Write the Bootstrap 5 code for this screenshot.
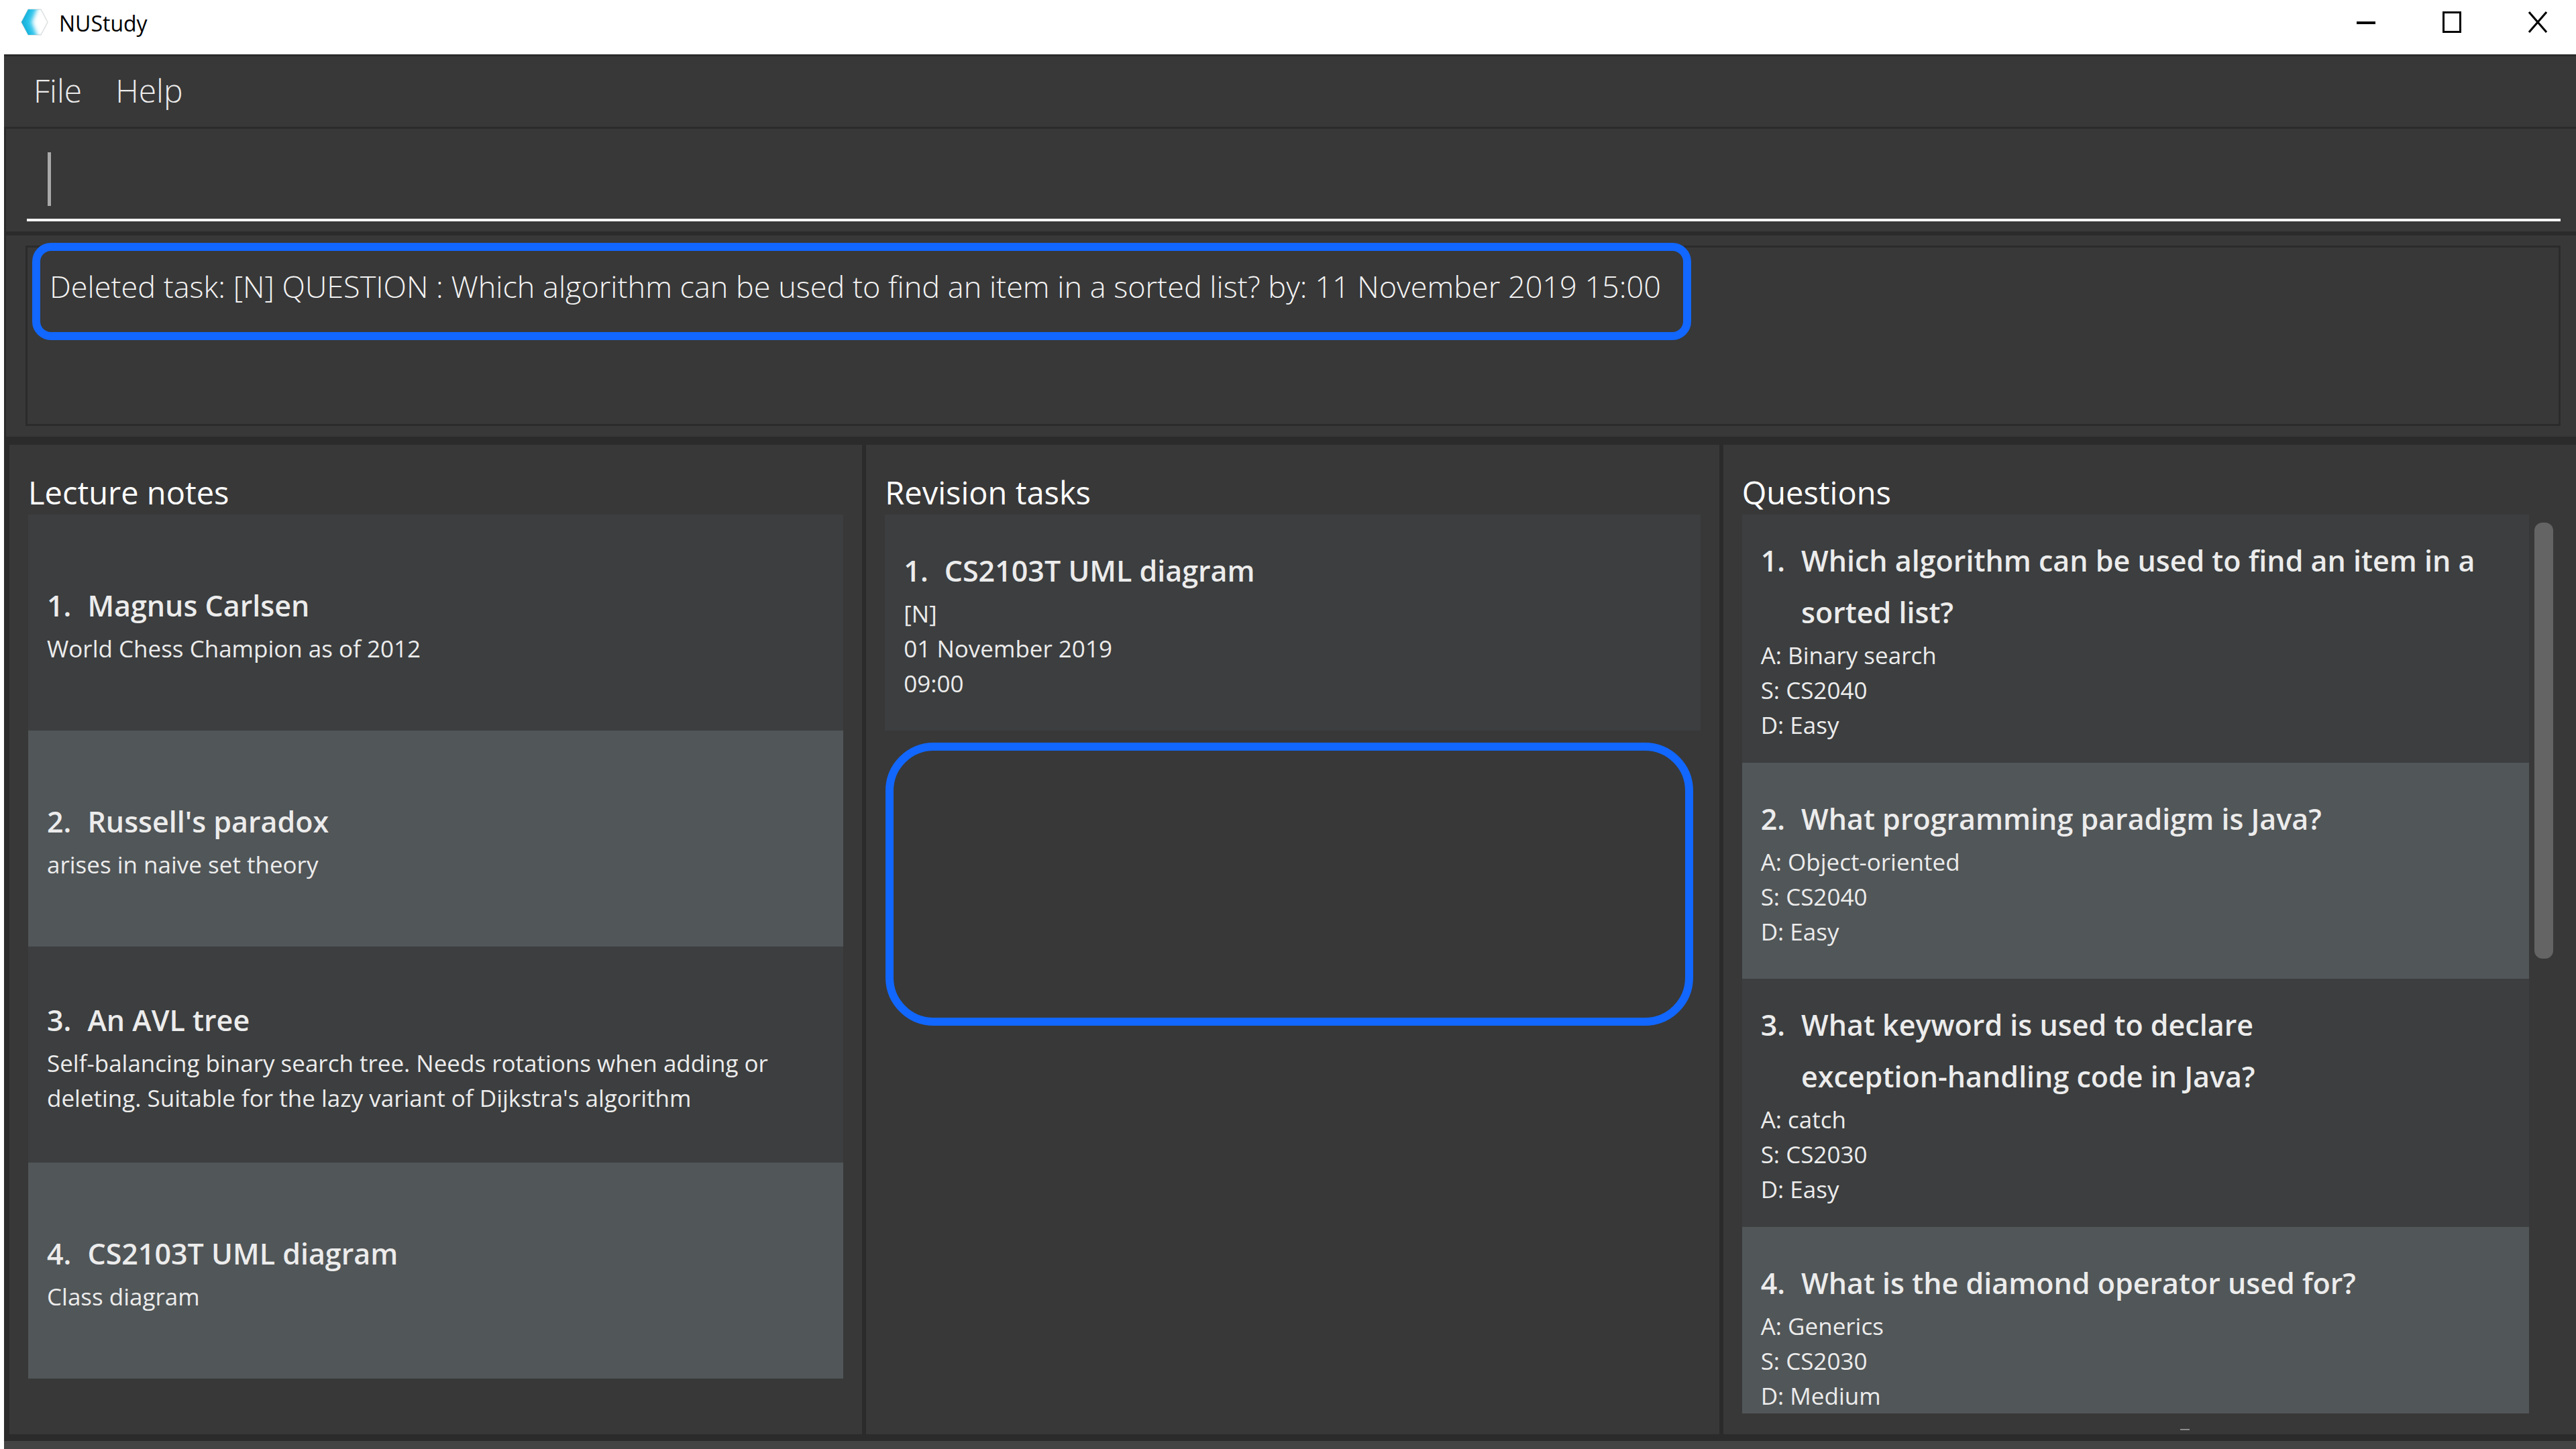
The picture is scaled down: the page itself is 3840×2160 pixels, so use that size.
<!DOCTYPE html>
<html lang="en">
<head>
<meta charset="utf-8">
<meta name="viewport" content="width=device-width, initial-scale=1">
<title>NUStudy</title>
<link rel="stylesheet" href="https://cdn.jsdelivr.net/npm/bootstrap@5.3.0/dist/css/bootstrap.min.css">
<style>
  :root {
    --base: #383838;
    --line: #2b2b2b;
    --row-odd: #3c3e3f;
    --row-even: #515658;
    --marker: #1167ff;
  }
  body { font-family: "Open Sans", "Noto Sans", sans-serif; background: #fff; color: #ececec; }
  .title-bar { height: 81px; padding: 0 43px 15px 31px; color: #000; }
  .title-text { font-size: 32px; line-height: 36px; padding-top: 4px; margin-left: 15px; }
  .window-buttons { gap: 100px; }
  .window-buttons .btn { line-height: 0; }
  .app-frame { margin-left: 6px; background: #444; padding-bottom: 12px; }
  .frame-line { border-left: 3px solid var(--line); background: var(--base); }
  .menu-strip { background: var(--base); border: solid var(--line); border-width: 3px 0; height: 111px; padding: 0 0 4px 44px; gap: 50px; }
  .menu-strip .nav-link { font-size: 48px; line-height: 64px; font-weight: 300; color: #ececec; }
  .command-area { height: 159px; padding: 16px 23px 15px 31px; border-bottom: 6px solid var(--line); }
  .command-line { border-bottom: 4px solid #f4f4f4; padding-left: 31px; }
  .caret { width: 5px; height: 80px; background: #a9a9a9; }
  .command-input, .command-input:focus { font-size: 45px; font-weight: 300; color: #fff; background: transparent; box-shadow: none; outline: 0; }
  .result-area { padding: 15px 23px 16px 29px; }
  .result-box { height: 269px; border: 3px solid var(--line); }
  .marker { border: 12px solid var(--marker); }
  .result-text { font-size: 45px; line-height: 105px; font-weight: 300; color: #f4f4f4; border-radius: 28px; margin: -7px 0 0 7px; padding: 0 33px 16px 14px; }
  .panels { display: grid; grid-template-columns: repeat(3, minmax(0, 1fr)); background: var(--line); gap: 6px; border: solid var(--line); border-width: 12px 0 10px 8px; min-height: 0; }
  .panel { background: var(--base); min-height: 0; padding: 38px 28px 0; }
  .panel-scroll { padding-right: 34px; }
  .panel-title { font-size: 47px; line-height: 66px; font-weight: 400; color: #fff; }
  .entry { min-height: 322px; padding: 30px 28px; }
  .entry:nth-child(odd) { background: var(--row-odd); }
  .entry:nth-child(even) { background: var(--row-even); }
  .entry-title { font-size: 43px; line-height: 77px; font-weight: 600; gap: 24px; padding-right: 24px; }
  .entry-text { font-size: 35px; line-height: 52px; }
  .removed-slot { height: 422px; border-radius: 72px; margin: 18px 11px 0 1px; }
  .list-wrap { gap: 8px; min-height: 0; }
  .scroll-thumb { width: 28px; height: 650px; margin-top: 12px; border-radius: 12px; background: #646464; }
  .panel-foot { height: 31px; padding: 23px 0 0 653px; }
  .grip { width: 14px; height: 2px; background: #8a8a8a; }
</style>
</head>
<body class="vh-100 d-flex flex-column overflow-hidden">

<header class="title-bar d-flex align-items-center flex-shrink-0">
  <svg width="42" height="40" viewBox="0 0 42 40" aria-hidden="true">
    <defs>
      <clipPath id="hex"><path d="M11 1H30L40 20L30 39H11L1 20Z"/></clipPath>
      <filter id="soft" x="-50%" y="-50%" width="200%" height="200%"><feGaussianBlur stdDeviation="3"/></filter>
    </defs>
    <path d="M11 1H30L40 20L30 39H11L1 20Z" fill="#fff" stroke="#dcdfe0" stroke-width="1.500"/>
    <g clip-path="url(#hex)">
      <path d="M-10 -10H28L16 20L28 50H-10Z" fill="#2cc3ea" filter="url(#soft)"/>
      <path d="M-10 -10H16L5 20L16 50H-10Z" fill="#0c9fca" fill-opacity=".7" filter="url(#soft)"/>
    </g>
  </svg>
  <span class="title-text">NUStudy</span>
  <div class="window-buttons d-flex ms-auto">
    <button type="button" class="btn p-0 border-0" aria-label="Minimize"><svg width="28" height="32" viewBox="0 0 28 32"><path d="M0 17H28" stroke="#000" stroke-width="4"/></svg></button>
    <button type="button" class="btn p-0 border-0" aria-label="Maximize"><svg width="28" height="32" viewBox="0 0 28 32"><rect x="1.500" y="1.500" width="25" height="29" fill="none" stroke="#000" stroke-width="3"/></svg></button>
    <button type="button" class="btn p-0 border-0" aria-label="Close"><svg width="28" height="32" viewBox="0 0 28 32"><path d="M1 1L27 31M27 1L1 31" stroke="#000" stroke-width="3"/></svg></button>
  </div>
</header>

<main class="app-frame d-flex flex-column flex-fill overflow-hidden">
  <nav class="menu-strip nav align-items-center flex-shrink-0">
    <a class="nav-link p-0" href="#">File</a>
    <a class="nav-link p-0" href="#">Help</a>
  </nav>

  <div class="command-area frame-line d-flex flex-shrink-0">
    <div class="command-line d-flex align-items-center flex-fill">
      <span class="caret"></span>
      <input type="text" class="command-input form-control border-0 p-0" aria-label="Command">
    </div>
  </div>

  <div class="result-area frame-line flex-shrink-0">
    <div class="result-box d-flex align-items-start" role="status">
      <div class="result-text marker">Deleted task: [N] QUESTION : Which algorithm can be used to find an item in a sorted list? by: 11 November 2019 15:00</div>
    </div>
  </div>

  <div class="panels flex-fill">
    <section class="panel">
      <h2 class="panel-title m-0">Lecture notes</h2>
      <div class="entries">
        <article class="entry d-flex flex-column justify-content-center">
          <div class="entry-title d-flex"><span>1.</span><span>Magnus Carlsen</span></div>
          <div class="entry-text">World Chess Champion as of 2012</div>
        </article>
        <article class="entry d-flex flex-column justify-content-center">
          <div class="entry-title d-flex"><span>2.</span><span>Russell's paradox</span></div>
          <div class="entry-text">arises in naive set theory</div>
        </article>
        <article class="entry d-flex flex-column justify-content-center">
          <div class="entry-title d-flex"><span>3.</span><span>An AVL tree</span></div>
          <div class="entry-text">Self-balancing binary search tree. Needs rotations when adding or deleting. Suitable for the lazy variant of Dijkstra's algorithm</div>
        </article>
        <article class="entry d-flex flex-column justify-content-center">
          <div class="entry-title d-flex"><span>4.</span><span>CS2103T UML diagram</span></div>
          <div class="entry-text">Class diagram</div>
        </article>
      </div>
    </section>

    <section class="panel">
      <h2 class="panel-title m-0">Revision tasks</h2>
      <div class="entries">
        <article class="entry d-flex flex-column justify-content-center">
          <div class="entry-title d-flex"><span>1.</span><span>CS2103T UML diagram</span></div>
          <div class="entry-text">[N]</div>
          <div class="entry-text">01 November 2019</div>
          <div class="entry-text">09:00</div>
        </article>
      </div>
      <div class="removed-slot marker"></div>
    </section>

    <section class="panel panel-scroll d-flex flex-column">
      <h2 class="panel-title m-0">Questions</h2>
      <div class="list-wrap d-flex flex-fill">
        <div class="entries flex-fill overflow-hidden">
          <article class="entry d-flex flex-column justify-content-center">
            <div class="entry-title d-flex"><span>1.</span><span>Which algorithm can be used to find an item in a sorted list?</span></div>
            <div class="entry-text">A: Binary search</div>
            <div class="entry-text">S: CS2040</div>
            <div class="entry-text">D: Easy</div>
          </article>
          <article class="entry d-flex flex-column justify-content-center">
            <div class="entry-title d-flex"><span>2.</span><span>What programming paradigm is Java?</span></div>
            <div class="entry-text">A: Object-oriented</div>
            <div class="entry-text">S: CS2040</div>
            <div class="entry-text">D: Easy</div>
          </article>
          <article class="entry d-flex flex-column justify-content-center">
            <div class="entry-title d-flex"><span>3.</span><span>What keyword is used to declare <span class="text-nowrap">exception-handling</span> code in Java?</span></div>
            <div class="entry-text">A: catch</div>
            <div class="entry-text">S: CS2030</div>
            <div class="entry-text">D: Easy</div>
          </article>
          <article class="entry d-flex flex-column justify-content-center">
            <div class="entry-title d-flex"><span>4.</span><span>What is the diamond operator used for?</span></div>
            <div class="entry-text">A: Generics</div>
            <div class="entry-text">S: CS2030</div>
            <div class="entry-text">D: Medium</div>
          </article>
        </div>
        <div class="scroll-thumb flex-shrink-0"></div>
      </div>
      <div class="panel-foot flex-shrink-0"><div class="grip"></div></div>
    </section>
  </div>
</main>

<script src="https://cdn.jsdelivr.net/npm/bootstrap@5.3.0/dist/js/bootstrap.bundle.min.js"></script>
</body>
</html>
